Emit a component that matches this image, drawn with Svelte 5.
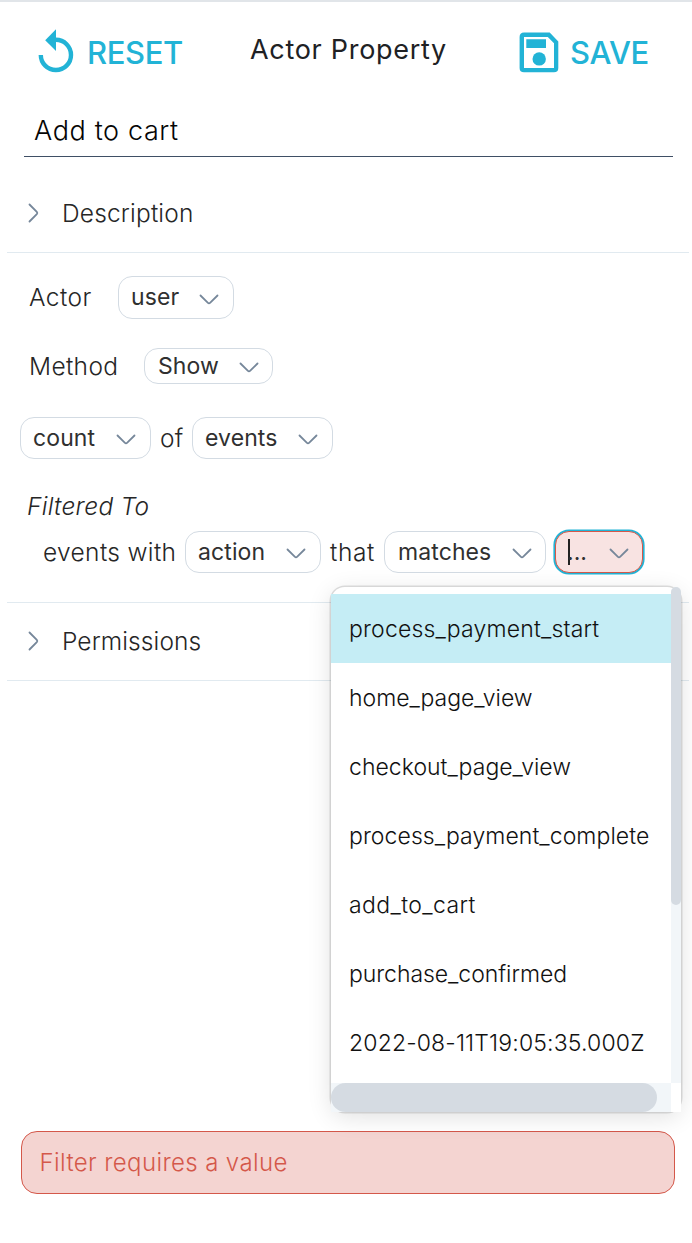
<script>
  const options = [
    { text: 'process_payment_start', tracking: 0.18 },
    { text: 'home_page_view', tracking: -0.02 },
    { text: 'checkout_page_view', tracking: 0.03 },
    { text: 'process_payment_complete', tracking: 0.07 },
    { text: 'add_to_cart', tracking: 0.4 },
    { text: 'purchase_confirmed', tracking: -0.05 },
    { text: '2022-08-11T19:05:35.000Z', tracking: 0.155 }
  ];
  let active = $state(0);
</script>

{#snippet chevron()}
  <svg class="chevron" width="20" height="12" viewBox="0 0 20 12" aria-hidden="true">
    <path d="M1.5 1.5 L8.7 8.6 Q10 9.8 11.3 8.6 L18.5 1.5" />
  </svg>
{/snippet}

{#snippet pill(label, cls)}
  <button class="pill {cls}"><span>{label}</span>{@render chevron()}</button>
{/snippet}

{#snippet section(label)}
  <div class="section">
    <svg width="12" height="20" viewBox="0 0 12 20" aria-hidden="true">
      <path d="M1.5 1.5 L8.8 8.9 Q9.8 10 8.8 11.1 L1.5 18.5" />
    </svg>
    <span>{label}</span>
  </div>
{/snippet}

<main>
  <header>
    <button class="action reset">
      <svg width="36" height="44" viewBox="0 0 36 44" aria-hidden="true">
        <path class="ring" d="M17.9 10.8 A15.1 15.1 0 1 1 2.8 25.9" />
        <path class="fill" d="M18 .3 V22 L7.2 11.2 Z" />
      </svg>
      <span>RESET</span>
    </button>
    <h1>Actor Property</h1>
    <button class="action save">
      <svg width="40" height="42" viewBox="0 0 40 42" aria-hidden="true">
        <path class="fill" fill-rule="evenodd" d="M5 .5 H30.7 L39.3 9.4 V36 Q39.3 40.3 35 40.3 H5 Q.6 40.3 .6 36 V5 Q.6 .5 5 .5 Z M5 5 V36 H35 V11.2 L28.8 5 Z M7.3 7.3 H27 V16 H7.3 Z" />
        <circle class="fill" cx="20.2" cy="26.9" r="6.7" />
      </svg>
      <span>SAVE</span>
    </button>
  </header>

  <div class="name"><span>Add to cart</span></div>

  {@render section('Description')}

  <div class="row actor"><span class="label">Actor</span>{@render pill('user', 'w-user')}</div>
  <div class="row method"><span class="label">Method</span>{@render pill('Show', 'w-show')}</div>
  <div class="row measure">
    {@render pill('count', 'w-count')}<span class="label of">of</span>{@render pill('events', 'w-events')}
  </div>

  <div class="filtered"><em>Filtered To</em></div>
  <div class="row filter">
    <span class="label with">events with</span>
    {@render pill('action', 'w-action')}
    <span class="label that">that</span>
    {@render pill('matches', 'w-matches')}
    <div class="picker">
      <button class="pill invalid"><i class="caret"></i><span>...</span>{@render chevron()}</button>
      <div class="menu">
        <div class="list">
          {#each options as option, i}
            <button class="option" class:active={i === active} onclick={() => (active = i)}>
              <span style="letter-spacing: {option.tracking}px">{option.text}</span>
            </button>
          {/each}
        </div>
        <div class="vtrack"><div class="vthumb"></div></div>
        <div class="htrack"><div class="hthumb"></div></div>
        <div class="corner"></div>
      </div>
    </div>
  </div>

  <div class="permissions">{@render section('Permissions')}</div>

  <div class="alert"><span>Filter requires a value</span></div>
</main>

<style>
  :global(body) { background: #fff; }
  main {
    box-sizing: border-box;
    width: 692px;
    height: 1243px;
    overflow: hidden;
    display: flex;
    flex-direction: column;
    border-top: 2px solid #e1e5e9;
    font-family: Inter, sans-serif;
    font-size: 24px;
    font-weight: 300;
    letter-spacing: 0.35px;
    color: #262626;
    background: #fff;
  }
  button {
    border: 0;
    margin: 0;
    padding: 0;
    background: none;
    font: inherit;
    letter-spacing: inherit;
    color: inherit;
    text-align: left;
  }
  span, em, h1 { white-space: nowrap; }
  svg { display: block; flex: none; }

  header {
    height: 98px;
    display: grid;
    grid-template-columns: 250px 269px 173px;
    align-items: start;
  }
  .action {
    display: flex;
    align-items: center;
    color: #22b3d6;
    font-size: 31px;
    font-weight: 500;
    letter-spacing: -0.35px;
  }
  .action .fill { fill: currentColor; }
  .action .ring { fill: none; stroke: currentColor; stroke-width: 4.4; }
  .reset { padding: 26px 0 0 38px; gap: 13px; }
  .save { padding: 30px 0 0 0; gap: 11px; }
  .reset span, .save span { line-height: 42px; }
  .reset span { padding-top: 4px; }
  h1 {
    margin: 29px 0 0;
    font-size: 27px;
    line-height: 38px;
    font-weight: 400;
    letter-spacing: 0.7px;
    color: #202124;
  }

  .name {
    box-sizing: border-box;
    height: 57px;
    margin: 0 19px 0 24px;
    padding: 12px 0 0 10px;
    border-bottom: 1px solid #3f4f65;
    font-size: 27px;
    letter-spacing: 0.62px;
    line-height: 38px;
    color: #050505;
  }

  .section {
    box-sizing: border-box;
    height: 96px;
    margin: 0 3px 0 7px;
    padding: 16px 0 0 20.5px;
    display: flex;
    align-items: center;
    gap: 22.5px;
    border-bottom: 1px solid #e1eaf0;
    font-size: 24.5px;
    letter-spacing: 0.17px;
  }
  .section svg path, .chevron path {
    fill: none;
    stroke: #76879a;
    stroke-width: 1.8;
    stroke-linecap: round;
  }

  .row { display: flex; align-items: center; }
  .label { font-size: 24.5px; line-height: 36px; }
  .pill {
    box-sizing: border-box;
    height: 42px;
    flex: none;
    display: flex;
    align-items: center;
    justify-content: space-between;
    padding: 0 14px 0 12px;
    border: 1px solid #d3dbe3;
    border-radius: 14px;
    background: #fff;
    color: #303030;
    font-size: 23px;
    font-weight: 400;
    letter-spacing: 0.1px;
  }
  .pill span { line-height: 34px; }
  .chevron { margin-top: 4px; }

  .actor { height: 43px; margin: 23px 0 0 29px; }
  .actor .label { width: 89px; margin-top: -2px; letter-spacing: 0.48px; }
  .actor :global(.pill) { height: 43px; padding-bottom: 1px; }
  .actor :global(.chevron) { margin-top: 5px; }
  .method { height: 36px; margin: 29px 0 0 29px; }
  .method .label { width: 115px; }
  .method :global(.pill) { height: 36px; padding-left: 13px; padding-right: 13px; }
  .measure { height: 42px; margin: 33px 0 0 20px; }
  .of { width: 32px; margin-left: 9px; }
  .w-user { width: 116px; }
  .w-show { width: 129px; }
  .w-count { width: 131px; }
  .w-events { width: 141px; }
  .w-action { width: 136px; }
  .w-matches { width: 162px; padding-left: 13px; padding-right: 13px; }

  .filtered { margin: 29px 0 0 27px; line-height: 36px; font-size: 24.5px; letter-spacing: 0.25px; }
  .filtered em { font-style: italic; }
  .filter { height: 42px; margin: 7px 0 0 43px; }
  .with { width: 142px; }
  .that { width: 54px; margin-left: 9px; letter-spacing: 0.6px; }
  .picker { position: relative; margin-left: 9px; }
  .invalid {
    width: 88px;
    padding-right: 13px;
    border-color: #d4584a;
    background: #f8e3e2;
    box-shadow: 0 0 0 1.6px #22b3d6;
    justify-content: flex-start;
  }
  .invalid span { margin-left: -3px; letter-spacing: 0; }
  .caret { width: 2px; height: 26px; background: #222; }
  .invalid :global(.chevron) { margin-left: auto; }

  .menu {
    position: absolute;
    z-index: 2;
    top: 56px;
    left: -224px;
    width: 350px;
    height: 525px;
    display: grid;
    grid-template-columns: 340px 10px;
    grid-template-rows: 496px 29px;
    border-radius: 14px;
    background: #fff;
    box-shadow: 0 0 0 1.5px rgba(0, 0, 0, 0.12), 0 5px 24px rgba(0, 0, 0, 0.12);
  }
  .list { padding-top: 7px; overflow: hidden; }
  .option {
    display: flex;
    align-items: center;
    width: 100%;
    height: 69px;
    padding-left: 18px;
    font-size: 23px;
    color: #111;
  }
  .option.active { background: #c5edf5; }
  .vtrack, .htrack { background: #f2f6f9; }
  .vtrack { border-radius: 5px 5px 0 0; }
  .vthumb { height: 318px; border-radius: 5px; background: #d5dbe2; }
  .hthumb { width: 326px; height: 29px; border-radius: 14.5px; background: #d5dbe2; }
  .corner { background: #fff; }

  .permissions { margin-top: 29px; }
  .permissions :global(.section) { height: 79px; padding-top: 0; padding-bottom: 2px; border-top: 1px solid #e1eaf0; letter-spacing: 0.1px; }

  .alert {
    box-sizing: border-box;
    height: 63px;
    margin: 450px 17px 0 21px;
    padding-left: 17.5px;
    display: flex;
    align-items: center;
    border: 1px solid #d4584a;
    border-radius: 16px;
    background: #f4d4d1;
    color: #d4584a;
    letter-spacing: 0.38px;
  }
</style>
